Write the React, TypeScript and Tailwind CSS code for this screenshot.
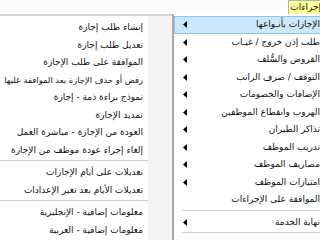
import React, { ReactElement } from 'react';

type MenuEntry = { label: string; arrow?: boolean; active?: boolean; tight?: boolean } | 'sep';

const leftItems: MenuEntry[] = [
  { label: 'إنشاء طلب إجازة' },
  { label: 'تعديل طلب إجازة' },
  { label: 'الموافقة على طلب الإجازة' },
  { label: 'رفض أو حذف الإجازة بعد الموافقة عليها', tight: true },
  { label: 'نموذج براءة ذمة - إجازة' },
  { label: 'تمديد الإجازة' },
  { label: 'العودة من الإجازة - مباشرة العمل' },
  { label: 'إلغاء إجراء عودة موظف من الإجازة' },
  'sep',
  { label: 'تعديلات على أيام الإجازات' },
  { label: 'تعديلات الأيام بعد تغير الإعدادات' },
  'sep',
  { label: 'معلومات إضافية - الإنجليزية' },
  { label: 'معلومات إضافية - العربية' },
];

const rightItems: MenuEntry[] = [
  { label: 'الإجازات بأنـواعها', arrow: true, active: true },
  { label: 'طلب إذن خروج / غيـاب', arrow: true },
  { label: 'القروض والسُّلف', arrow: true },
  { label: 'التوقف / صرف الراتب', arrow: true },
  { label: 'الإضافات والخصومات', arrow: true },
  { label: 'الهروب وانقطاع الموظفين', arrow: true },
  { label: 'تذاكر الطيران', arrow: true },
  { label: 'تدريب الموظف', arrow: true },
  { label: 'مصاريف الموظف', arrow: true },
  { label: 'امتيازات الموظف', arrow: true },
  { label: 'الموافقة على الإجراءات' },
  'sep',
  { label: 'نهاية الخدمة', arrow: true },
  'sep',
];

const Arrow = (): ReactElement => (
  <svg width="4" height="7" viewBox="0 0 4 7" className="shrink-0">
    <path d="M4 0 L0 3.5 L4 7 Z" fill="#000" />
  </svg>
);

const Separator = (): ReactElement => (
  <div className="h-[5px] pt-[1px]">
    <div className="h-px bg-[#d2d2d2]" />
  </div>
);

const App = (): ReactElement => (
  <div
    className="relative h-[240px] w-[320px] overflow-hidden bg-white text-[9px] text-[#111]"
    style={{ fontFamily: '"DejaVu Sans", sans-serif' }}
  >
    {/* top strip with the yellow tab */}
    <div className="flex h-[16px] border-b-2 border-[#d6d6d6] bg-[#fcfcfc]">
      <div className="ml-[288px] flex h-[14px] w-[40px] shrink-0 items-center justify-end border border-b-0 border-[#b4b4b4] bg-[#ffff99] pr-[6px]">
        <span dir="rtl" className="whitespace-nowrap">إجراءات</span>
      </div>
    </div>

    <div className="flex w-[360px]">
      {/* submenu on the left */}
      <div className="w-[148px] shrink-0 pt-[3px]">
        {leftItems.map((item, i) =>
          item === 'sep' ? (
            <Separator key={i} />
          ) : (
            <div key={i} className="flex h-[17.5px] items-center justify-end pr-[5px]">
              <span dir="rtl" className={`whitespace-nowrap ${item.tight ? 'text-[8.4px]' : ''}`}>
                {item.label}
              </span>
            </div>
          )
        )}
      </div>

      <div className="h-[230px] w-[24px] shrink-0 bg-[#f4f4f4]" />

      {/* main menu on the right */}
      <div className="-mt-[2px] w-[160px] shrink-0 border-l-2 border-[#a9a9a9] bg-white pt-[2px]">
        {rightItems.map((item, i) =>
          item === 'sep' ? (
            <div key={i} className="h-[5px] pt-[1px] pl-[8px]">
              <div className="h-px bg-[#d2d2d2]" />
            </div>
          ) : (
            <div
              key={i}
              className={`flex h-[17.5px] items-center pl-[8px] pr-[11px] ${
                item.active ? 'border border-[#8fc3ee] bg-[#cce6fa]' : 'border border-transparent'
              }`}
            >
              <div className="w-[4px] shrink-0">{item.arrow && <Arrow />}</div>
              <span dir="rtl" className="ml-auto whitespace-nowrap">{item.label}</span>
            </div>
          )
        )}
      </div>
    </div>
  </div>
);

export default App;
